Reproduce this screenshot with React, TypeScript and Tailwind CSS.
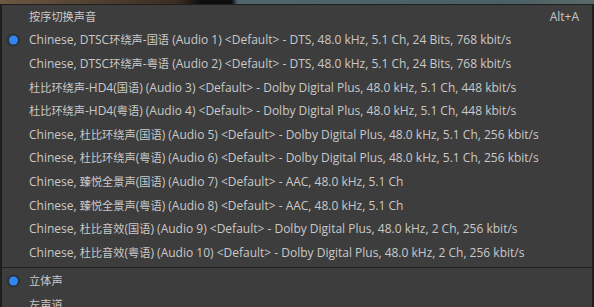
const tracks = [
  "Chinese, DTSC环绕声-国语 (Audio 1) <Default> - DTS, 48.0 kHz, 5.1 Ch, 24 Bits, 768 kbit/s",
  "Chinese, DTSC环绕声-粤语 (Audio 2) <Default> - DTS, 48.0 kHz, 5.1 Ch, 24 Bits, 768 kbit/s",
  "杜比环绕声-HD4(国语) (Audio 3) <Default> - Dolby Digital Plus, 48.0 kHz, 5.1 Ch, 448 kbit/s",
  "杜比环绕声-HD4(粤语) (Audio 4) <Default> - Dolby Digital Plus, 48.0 kHz, 5.1 Ch, 448 kbit/s",
  "Chinese, 杜比环绕声(国语) (Audio 5) <Default> - Dolby Digital Plus, 48.0 kHz, 5.1 Ch, 256 kbit/s",
  "Chinese, 杜比环绕声(粤语) (Audio 6) <Default> - Dolby Digital Plus, 48.0 kHz, 5.1 Ch, 256 kbit/s",
  "Chinese, 臻悦全景声(国语) (Audio 7) <Default> - AAC, 48.0 kHz, 5.1 Ch",
  "Chinese, 臻悦全景声(粤语) (Audio 8) <Default> - AAC, 48.0 kHz, 5.1 Ch",
  "Chinese, 杜比音效(国语) (Audio 9) <Default> - Dolby Digital Plus, 48.0 kHz, 2 Ch, 256 kbit/s",
  "Chinese, 杜比音效(粤语) (Audio 10) <Default> - Dolby Digital Plus, 48.0 kHz, 2 Ch, 256 kbit/s",
];

// CJK glyphs render a bit narrower than the latin text in the original menu
function Label({ text }: { text: string }) {
  const parts = text.split(/([\u4e00-\u9fff]+)/);
  return (
    <>
      {parts.map((p, i) =>
        /[\u4e00-\u9fff]/.test(p) ? (
          <span key={i} className="text-[11.2px]">
            {p}
          </span>
        ) : (
          <span key={i}>{p}</span>
        ),
      )}
    </>
  );
}

function Radio() {
  return (
    <span className="absolute left-[7px] top-1/2 -translate-y-1/2 w-[9px] h-[9px] rounded-full bg-[#2f86f0] ring-2 ring-[#2a2f38]" />
  );
}

function Item({ label, checked, shortcut }: { label: string; checked?: boolean; shortcut?: string }) {
  return (
    <div className="relative flex items-center h-[23.6px] pl-[27px] pr-[13px] text-[#c9c9c9] hover:bg-[#4a4a4a] cursor-default">
      {checked && <Radio />}
      <span className="flex-1 whitespace-nowrap">
        <Label text={label} />
      </span>
      {shortcut && <span>{shortcut}</span>}
    </div>
  );
}

export default function App() {
  return (
    <div
      className="w-[594px] h-[307px] overflow-hidden bg-[#3d3d3d] flex flex-col text-[12px] leading-none"
      style={{ fontFamily: '"Open Sans", "Noto Sans CJK SC", sans-serif' }}
    >
      <div className="h-[4px] shrink-0 bg-[linear-gradient(90deg,#6d5843_0%,#3a2c22_30%,#0d0d0d_34%,#0d0d0d_39%,#50666c_40%,#4a6066_85%,#5a6a68_100%)]" />
      <div className="flex-1 bg-[#3d3d3d] border-t border-l-2 border-r-2 border-[#1e1e1e]">
        <div className="pt-[0px]">
          <Item label="按序切换声音" shortcut="Alt+A" />
          {tracks.map((t, i) => (
            <Item key={t} label={t} checked={i === 0} />
          ))}
        </div>
        <div className="h-px bg-[#222] my-[2px]" />
        <Item label="立体声" checked />
        <Item label="左声道" />
      </div>
    </div>
  );
}
